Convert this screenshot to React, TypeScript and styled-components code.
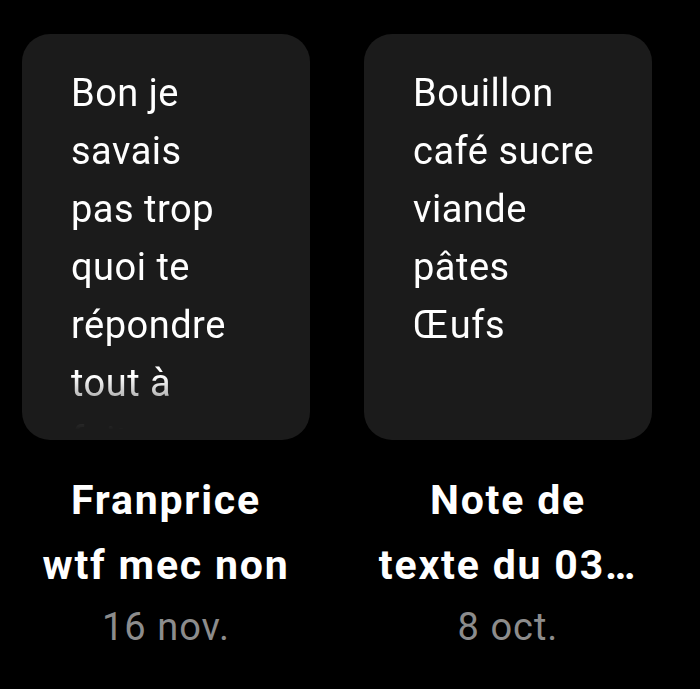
import React from "react";
import styled, { createGlobalStyle } from "styled-components";

interface Note {
  id: string;
  body: string;
  title: string[];
  date: string;
}

const notes: Note[] = [
  {
    id: "1",
    body: "Bon je\nsavais\npas trop\nquoi te\nrépondre\ntout à\nfait...",
    title: ["Franprice", "wtf mec non"],
    date: "16 nov.",
  },
  {
    id: "2",
    body: "Bouillon\ncafé sucre\nviande\npâtes\nŒufs",
    title: ["Note de", "texte du 03…"],
    date: "8 oct.",
  },
];

const App: React.FC = () => {
  return (
    <>
      <GlobalStyle />
      <Grid>
        {notes.map((note) => (
          <NoteItem key={note.id}>
            <Card>
              <CardText>{note.body}</CardText>
            </Card>
            <Title>
              {note.title.map((line) => (
                <span key={line}>{line}</span>
              ))}
            </Title>
            <DateLabel>{note.date}</DateLabel>
          </NoteItem>
        ))}
      </Grid>
    </>
  );
};
export default App;

const GlobalStyle = createGlobalStyle`
  html, body {
    margin: 0;
    background: #000;
    font-family: Roboto, "Liberation Sans", sans-serif;
  }
`;

const Grid = styled.div`
  display: grid;
  grid-template-columns: 288px 288px;
  column-gap: 54px;
  padding: 34px 0 0 22px;
  min-height: 655px;
  background: #000;
`;

const NoteItem = styled.div`
  display: flex;
  flex-direction: column;
  align-items: center;
`;

const Card = styled.div`
  width: 100%;
  height: 406px;
  box-sizing: border-box;
  background-color: #1b1b1b;
  border-radius: 28px;
  padding: 30px 20px 0 49px;
  overflow: hidden;
`;

// le dernier bout de texte s'efface vers le bas de la carte
const fade = `linear-gradient(
  to bottom,
  #000 0,
  #000 312px,
  rgba(0, 0, 0, 0.6) 338px,
  rgba(0, 0, 0, 0.08) 358px,
  rgba(0, 0, 0, 0) 366px
)`;

const CardText = styled.p`
  margin: 0;
  color: #fff;
  font-size: 38px;
  letter-spacing: 0.5px;
  line-height: 58px;
  white-space: pre;
  height: 366px;
  overflow: hidden;
  -webkit-mask-image: ${fade};
  mask-image: ${fade};
`;

const Title = styled.div`
  margin-top: 28px;
  display: flex;
  flex-direction: column;
  align-items: center;
  color: #fff;
  font-size: 41px;
  font-weight: 700;
  letter-spacing: 1.8px;
  line-height: 65px;
  white-space: nowrap;
`;

const DateLabel = styled.div`
  color: #8c8c8c;
  font-size: 38px;
  letter-spacing: 1px;
  line-height: 58px;
`;
